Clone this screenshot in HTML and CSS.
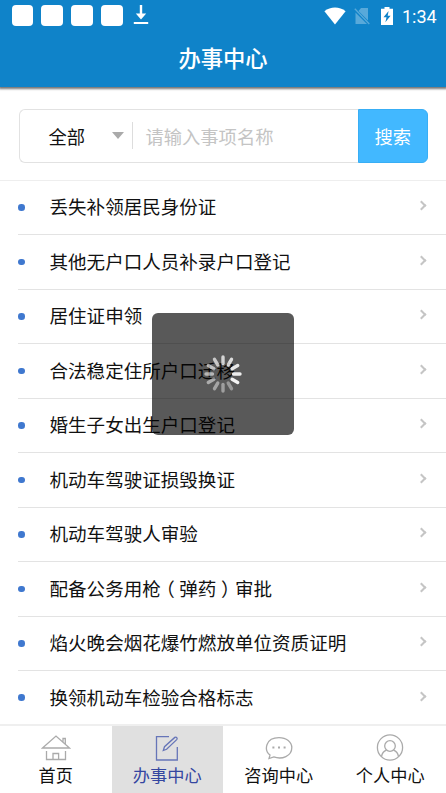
FILE: index.html
```
<!DOCTYPE html>
<html lang="zh-CN">
<head>
<meta charset="utf-8">
<title>办事中心</title>
<link rel="stylesheet" href="styles.css">
</head>
<body>
<header class="header">
  <div class="status">
    <div class="notices">
      <i class="notice"></i><i class="notice"></i><i class="notice"></i><i class="notice"></i>
      <svg class="download" width="16" height="20" viewBox="0 0 16 20"><path d="M6.800 0h2.400v8.500h4L8 14.500 2.800 8.500h4zM.8 17h14.400v2H.8z" fill="#fff"/></svg>
    </div>
    <svg class="wifi" width="22" height="18" viewBox="0 0 22 18"><path d="M.4 4.200C6.500-.8 15.500-.8 21.600 4.200L11 17.600z" fill="#fff"/></svg>
    <svg class="sim" width="16" height="18" viewBox="0 0 16 18"><path d="M7 1h7v12.500L4.500 4zM1.500 5.500 13 17H1.500z" fill="#58a9da"/><path d="M.8 1.800 15.300 17" stroke="#58a9da" stroke-width="1.300"/></svg>
    <svg class="battery" width="12" height="18" viewBox="0 0 12 18"><path d="M3.500 0h5v1.800H12V18H0V1.800h3.500z" fill="#fff"/><path d="M7.600 4 2.500 10.300h3L4.400 15.300l5.200-6.500H6.700z" fill="#0f83c9"/></svg>
    <span class="clock">1:34</span>
  </div>
  <h1 class="title">办事中心</h1>
</header>
<main>
  <form class="search">
    <div class="field">
      <span class="scope">全部</span>
      <i class="caret"></i>
      <i class="divider"></i>
      <span class="placeholder">请输入事项名称</span>
    </div>
    <div class="submit">搜索</div>
  </form>
  <ul class="list">
    <li class="row"><i class="dot"></i><span class="name">丢失补领居民身份证</span><i class="chevron"></i></li>
    <li class="row"><i class="dot"></i><span class="name">其他无户口人员补录户口登记</span><i class="chevron"></i></li>
    <li class="row"><i class="dot"></i><span class="name">居住证申领</span><i class="chevron"></i></li>
    <li class="row"><i class="dot"></i><span class="name">合法稳定住所户口迁移</span><i class="chevron"></i></li>
    <li class="row"><i class="dot"></i><span class="name">婚生子女出生户口登记</span><i class="chevron"></i></li>
    <li class="row"><i class="dot"></i><span class="name">机动车驾驶证损毁换证</span><i class="chevron"></i></li>
    <li class="row"><i class="dot"></i><span class="name">机动车驾驶人审验</span><i class="chevron"></i></li>
    <li class="row"><i class="dot"></i><span class="name">配备公务用枪<span class="paren">（</span>弹药<span class="paren">）</span>审批</span><i class="chevron"></i></li>
    <li class="row"><i class="dot"></i><span class="name">焰火晚会烟花爆竹燃放单位资质证明</span><i class="chevron"></i></li>
    <li class="row"><i class="dot"></i><span class="name">换领机动车检验合格标志</span><i class="chevron"></i></li>
  </ul>
</main>
<nav class="tabs">
  <a class="tab">
    <svg class="icon" width="30" height="28" viewBox="0 0 30 28"><path d="M1.500 15 15 3l13.500 12zM22 9V5.500h2.300v5.500M5.500 18v8.500h19V18M12 26.500v-6h5.600v6" /></svg>
    <span>首页</span>
  </a>
  <a class="tab active">
    <svg class="icon" width="30" height="28" viewBox="0 0 30 28"><path d="M17 3.600H4.500v23.400h20.800V14"/><path d="m11.300 17.500 1.200-3.800L22.800 4.400q1.200-.7 2 .2.800 1-.1 2L14.600 16.300z"/></svg>
    <span>办事中心</span>
  </a>
  <a class="tab">
    <svg class="icon" width="30" height="28" viewBox="0 0 30 28"><path d="M6 22.100C-.3 17 1.500 4.600 15 4.600c7.500 0 12.800 4.500 12.800 10.200C27.800 23 18 27 9.800 23.900L5 25.500z"/><path d="M8.400 14.500h2M14 14.500h2M19.600 14.500h2" stroke-width="2"/></svg>
    <span>咨询中心</span>
  </a>
  <a class="tab">
    <svg class="icon" width="30" height="28" viewBox="0 0 30 28"><circle cx="15" cy="14.500" r="12.600"/><circle cx="15" cy="13" r="5.300"/><path d="M6.500 23.700c.5-3.500 2.200-5.500 5-6.500M23.500 23.700c-.5-3.500-2.200-5.500-5-6.500"/></svg>
    <span>个人中心</span>
  </a>
</nav>
<div class="loading">
  <svg width="40" height="40" viewBox="-20 -20 40 40" stroke="#fff" stroke-width="3.400" stroke-linecap="round">
    <path d="M0-10.500V-17" opacity=".74"/>
    <path d="M0-10.500V-17" transform="rotate(30)" opacity=".8"/>
    <path d="M0-10.500V-17" transform="rotate(60)" opacity=".86"/>
    <path d="M0-10.500V-17" transform="rotate(90)" opacity=".9"/>
    <path d="M0-10.500V-17" transform="rotate(120)" opacity=".93"/>
    <path d="M0-10.500V-17" transform="rotate(150)" opacity=".38"/>
    <path d="M0-10.500V-17" transform="rotate(180)" opacity=".42"/>
    <path d="M0-10.500V-17" transform="rotate(210)" opacity=".46"/>
    <path d="M0-10.500V-17" transform="rotate(240)" opacity=".5"/>
    <path d="M0-10.500V-17" transform="rotate(270)" opacity=".56"/>
    <path d="M0-10.500V-17" transform="rotate(300)" opacity=".62"/>
    <path d="M0-10.500V-17" transform="rotate(330)" opacity=".68"/>
  </svg>
</div>
</body>
</html>
```

FILE: styles.css
```
* {
  box-sizing: border-box;
}

body {
  display: flex;
  flex-direction: column;
  width: 446px;
  height: 793px;
  margin: 0;
  overflow: hidden;
  background: #fff;
  color: #111;
  font-family: "Noto Sans CJK SC", sans-serif;
}

.header {
  flex: none;
  height: 87px;
  background: #0f83c9;
  box-shadow: 0 1px 2px 1px #777;
  color: #fff;
}

.status {
  display: flex;
  align-items: center;
  height: 31px;
  padding: 0 10px 0 11.500px;
}

.notices {
  display: flex;
  flex: 1;
  align-items: center;
  gap: 8px;
}

.notice {
  width: 21.800px;
  height: 21.800px;
  border-radius: 4px;
  background: #fff;
}

.download {
  margin-left: 2px;
}

.sim {
  margin-left: 8px;
}

.battery {
  margin: 0 9px 0 11px;
}

.clock {
  width: 34px;
  padding-top: 1px;
  font-family: Roboto, sans-serif;
  font-size: 18px;
  line-height: 31px;
}

.title {
  margin: 9px 0 0;
  font-size: 22.300px;
  font-weight: 500;
  line-height: 34px;
  text-align: center;
}

.search {
  display: flex;
  height: 93.500px;
  margin: 0;
  padding: 22px 18.500px 17px;
  border-bottom: 1.500px solid #eee;
}

.field {
  display: flex;
  flex: 1;
  align-items: center;
  padding-left: 29px;
  border: 1.500px solid #e2e2e2;
  border-right: 0;
  border-radius: 6px 0 0 6px;
  font-size: 18.300px;
}

.scope {
  width: 63px;
}

.caret {
  border: 6px solid transparent;
  border-top: 7px solid #aaa;
  border-bottom: 0;
}

.divider {
  width: 1px;
  height: 27px;
  margin: 0 13px 0 8px;
  background: #ddd;
}

.placeholder {
  color: #c4c4c4;
}

.submit {
  width: 69.500px;
  border: 1px solid #38aef5;
  border-radius: 0 6px 6px 0;
  background: #42b8ff;
  color: #fff;
  font-size: 18.300px;
  line-height: 53px;
  text-align: center;
}

.list {
  margin: 0;
  padding: 0 0 0 18px;
  list-style: none;
}

.row {
  display: flex;
  align-items: center;
  height: 54.500px;
  padding-right: 21px;
  border-bottom: 1px solid #e3e3e3;
}

.row:last-child {
  height: 53px;
  border-bottom: 0;
}

.dot {
  width: 6.500px;
  height: 6.500px;
  border-radius: 50%;
  background: #3f78cf;
}

.name {
  flex: 1;
  margin: 0 0 2px 25px;
  font-size: 18.560px;
  line-height: 28px;
  white-space: nowrap;
}

/* Half-width bracket centred in a full-width cell */
.paren {
  display: inline-block;
  width: 1em;
  font-feature-settings: "halt";
  text-align: center;
}

.chevron {
  width: 7px;
  height: 7px;
  margin-bottom: 3px;
  border: solid #c5c5c5;
  border-width: 2px 2px 0 0;
  transform: rotate(45deg);
}

.tabs {
  display: flex;
  flex: none;
  height: 69px;
  border-top: 2px solid #efefef;
  background: #fff;
}

.tab {
  display: flex;
  flex: 1;
  flex-direction: column;
  align-items: center;
  padding-top: 7px;
  font-size: 17.200px;
  line-height: 27px;
}

.tab.active {
  background: #e0e0e0;
  color: #3446a0;
}

.icon {
  flex: none;
  fill: none;
  stroke: #aaa;
  stroke-width: 1.300;
}

.active .icon {
  stroke: #6675b8;
}

.loading {
  position: absolute;
  top: 313px;
  left: 152px;
  display: flex;
  align-items: center;
  justify-content: center;
  width: 142px;
  height: 122px;
  border-radius: 6px;
  background: rgba(0, 0, 0, .65);
}
```
